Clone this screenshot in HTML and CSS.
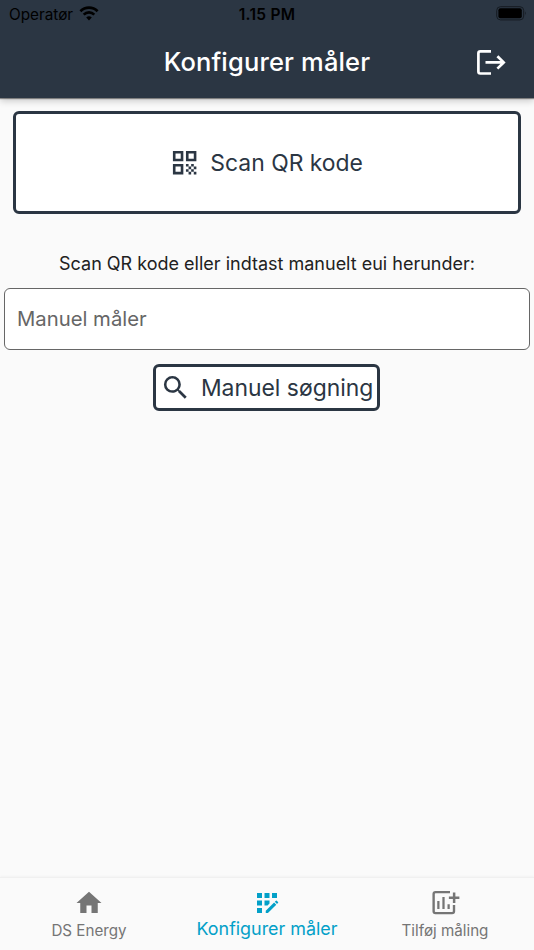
FILE: index.html
```
<!DOCTYPE html>
<html lang="da">
<head>
<meta charset="utf-8">
<title>Konfigurer måler</title>
<link rel="stylesheet" href="styles.css">
</head>
<body>
<header class="top">
  <div class="status">
    <div class="carrier"><span class="operator">Operatør</span>
      <svg class="wifi" viewBox="0 0 20 15"><path d="M10 14.5 7.2 11.6A4 4 0 0 1 12.8 11.6Z"/><path d="M4.7 8.6A7.6 7.6 0 0 1 15.3 8.6M1.4 5.2A12.3 12.3 0 0 1 18.6 5.2" fill="none" stroke="#000" stroke-width="2.7"/></svg>
    </div>
    <span class="time">1.15 PM</span>
    <div class="power"><svg class="battery" viewBox="0 0 32 15"><rect x="1.700" y=".7" width="27" height="13.2" rx="3.8" fill="none" stroke="#151b22" stroke-width="1"/><rect x="3.400" y="2.3" width="23.4" height="10" rx="2"/><path d="M30 5.3q1.8 2 0 4z" fill="#151b22"/></svg></div>
  </div>
  <div class="appbar">
    <h1 class="title">Konfigurer måler</h1>
    <svg class="logout" viewBox="0 0 30 28" fill="none" stroke="#fff" stroke-width="2.7"><path d="M15 2.3H4.3Q2.4 2.3 2.4 4.2V22.6Q2.4 24.5 4.3 24.5H15M9.5 13.4H28M21.4 7.2 27.7 13.4 21.4 19.6"/></svg>
  </div>
</header>
<main class="content">
  <button class="button scan">
    <svg class="icon" viewBox="0 0 24 24"><path d="M3 11h8V3H3v8zm2-6h4v4H5V5zM3 21h8v-8H3v8zm2-6h4v4H5v-4zM13 3v8h8V3h-8zm6 6h-4V5h4v4zM19 19h2v2h-2zM13 13h2v2h-2zM15 15h2v2h-2zM13 17h2v2h-2zM15 19h2v2h-2zM17 17h2v2h-2zM17 13h2v2h-2zM19 15h2v2h-2z"/></svg>
    <span class="scan-text">Scan QR kode</span>
  </button>
  <p class="hint"><span>Scan QR kode eller indtast manuelt eui herunder:</span></p>
  <input class="field" type="text" placeholder="Manuel måler" aria-label="Manuel måler">
  <button class="button search">
    <svg class="icon" viewBox="0 0 24 24"><path d="M15.5 14h-.79l-.28-.27A6.471 6.471 0 0 0 16 9.5 6.5 6.5 0 1 0 9.5 16c1.61 0 3.09-.59 4.23-1.57l.27.28v.79l5 4.99L20.49 19l-4.99-5zm-6 0C7.01 14 5 11.99 5 9.5S7.01 5 9.5 5 14 7.01 14 9.5 11.99 14 9.5 14z"/></svg>
    <span class="search-text">Manuel søgning</span>
  </button>
</main>
<nav class="tabs">
  <a class="tab">
    <svg class="tab-icon" viewBox="0 0 24 24"><path d="M10 20v-6h4v6h5v-8h3L12 3 2 12h3v8z"/></svg>
    <span class="energy">DS Energy</span>
  </a>
  <a class="tab active">
    <svg class="tab-icon" viewBox="0 0 24 24"><path d="M10 4h4v4h-4zM4 16h4v4H4zM4 10h4v4H4zM4 4h4v4H4zM14 12.42V10h-4v4h2.42zM20.88 11.29l-1.17-1.17c-.16-.16-.42-.16-.58 0l-.88.88L20 12.75l.88-.88c.16-.16.16-.42 0-.58zM11 18.25V20h1.75l6.67-6.67-1.75-1.75zM16 4h4v4h-4z"/></svg>
    <span class="configure">Konfigurer måler</span>
  </a>
  <a class="tab">
    <svg class="tab-icon" viewBox="0 0 24 24"><path d="M23.500 6.700h-3.200V3.500h-2v3.200h-3.200v2h3.200v3.200h2V8.700h3.200z"/><path d="M16 3.300H4.400Q2.900 3.300 2.900 4.800V18.600Q2.900 20.100 4.400 20.100H17.700Q19.200 20.100 19.200 18.600V13.600" fill="none" stroke="currentColor" stroke-width="1.900"/><path d="M5.800 10.400h1.800v6.400H5.800zM9.900 7.200h1.800v9.600H9.900zM14 13h1.800v3.800H14z"/></svg>
    <span class="measure">Tilføj måling</span>
  </a>
</nav>
</body>
</html>
```
FILE: styles.css
```
* { box-sizing: border-box; }
body {
  margin: 0;
  height: 950px;
  display: flex;
  flex-direction: column;
  overflow: hidden;
  background: #fafafa;
  color: #212121;
  font-family: Inter, "Liberation Sans", sans-serif;
  white-space: nowrap;
}
svg { display: block; flex: none; }
.top {
  height: 98px;
  flex: none;
  background: #2b3643;
  box-shadow: 0 1px 1px rgba(0, 0, 0, .4), 0 3px 7px rgba(0, 0, 0, .2);
}
.status {
  height: 28px;
  display: grid;
  grid-template-columns: 1fr auto 1fr;
  align-items: center;
  padding: 0 7px 0 9px;
  color: #000;
}
.carrier { display: flex; align-items: center; gap: 6px; }
.operator { font-size: 15.3px; }
.wifi { width: 20px; height: 15px; margin-top: -2px; }
.time { margin-left: -2px; font-size: 15.5px; font-weight: 600; letter-spacing: .25px; }
.power { display: flex; justify-content: flex-end; }
.battery { width: 32px; height: 15px; margin-top: -2px; }
.appbar {
  height: 69px;
  display: grid;
  grid-template-columns: 58px 1fr 58px;
  align-items: center;
}
.title {
  grid-column: 2;
  margin: 0 0 2px;
  text-align: center;
  color: #fff;
  font-size: 25.5px;
  font-weight: 500;
  letter-spacing: .16px;
  line-height: 32px;
}
.logout { width: 30px; height: 28px; }
.content {
  flex: 1;
  display: flex;
  flex-direction: column;
  align-items: center;
  padding: 13px 4px 0;
}
.button {
  display: flex;
  align-items: center;
  justify-content: center;
  background: #fff;
  border: 3px solid #2b3643;
  border-radius: 6px;
  color: #2b3643;
  font: 400 22.9px Inter, sans-serif;
  padding: 0;
}
.icon { width: 31.3px; height: 31.3px; fill: #2b3643; }
.scan { width: 508px; height: 103px; gap: 10px; padding-right: 2px; }
.hint { margin: 38px 0 13px; font-size: 18px; line-height: 23px; }
.field {
  width: 526px;
  height: 62px;
  border: 1.4px solid #666;
  border-radius: 6px;
  background: #fff;
  padding: 0 12px 2px;
  font: 400 20.3px Inter, sans-serif;
}
.field::placeholder { color: #666; opacity: 1; }
.search { width: 227px; height: 47px; margin: 14px 1px 0 0; gap: 10px; }
.tabs {
  height: 73px;
  flex: none;
  display: grid;
  grid-template-columns: repeat(3, 1fr);
  border-top: 1px solid #f0f0f0;
  box-shadow: 0 -1px 2px rgba(0, 0, 0, .03);
}
.tab {
  display: flex;
  flex-direction: column;
  align-items: center;
  padding-top: 10px;
  color: #757575;
  font-size: 15.2px;
  line-height: 25px;
}
.tab-icon { width: 30px; height: 30px; fill: currentColor; }
.active { color: #03a0c8; font-size: 17.9px; line-height: 22px; }
```
